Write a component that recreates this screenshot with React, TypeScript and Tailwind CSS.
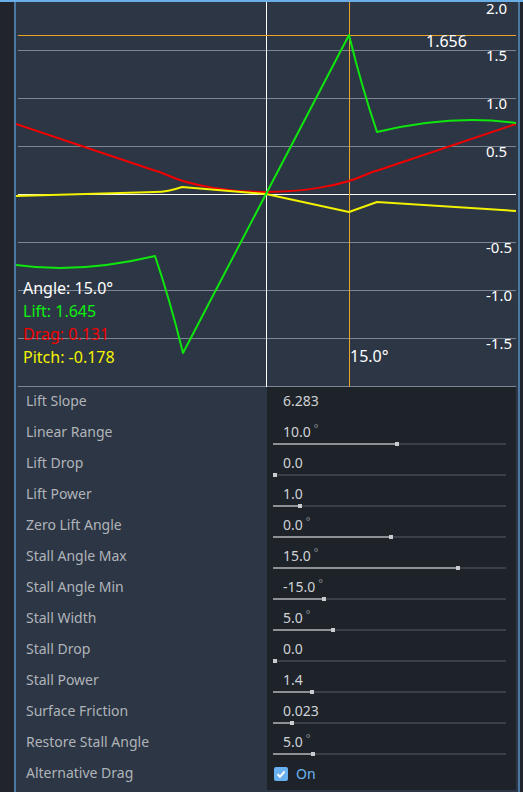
import React from "react";

type Row = {
  label: string;
  value?: string;
  deg?: boolean;
  f?: number;
  check?: boolean;
};

const rows: Row[] = [
  { label: "Lift Slope", value: "6.283" },
  { label: "Linear Range", value: "10.0", deg: true, f: 0.533 },
  { label: "Lift Drop", value: "0.0", f: 0 },
  { label: "Lift Power", value: "1.0", f: 0.109 },
  { label: "Zero Lift Angle", value: "0.0", deg: true, f: 0.507 },
  { label: "Stall Angle Max", value: "15.0", deg: true, f: 0.8 },
  { label: "Stall Angle Min", value: "-15.0", deg: true, f: 0.214 },
  { label: "Stall Width", value: "5.0", deg: true, f: 0.253 },
  { label: "Stall Drop", value: "0.0", f: 0 },
  { label: "Stall Power", value: "1.4", f: 0.16 },
  { label: "Surface Friction", value: "0.023", f: 0.074 },
  { label: "Restore Stall Angle", value: "5.0", deg: true, f: 0.165 },
  { label: "Alternative Drag", check: true },
];

const axis = [
  { t: "2.0", top: -1 },
  { t: "1.5", top: 46 },
  { t: "1.0", top: 94 },
  { t: "0.5", top: 142 },
  { t: "-0.5", top: 238 },
  { t: "-1.0", top: 286 },
  { t: "-1.5", top: 334 },
  { t: "-2.0", top: 382 },
];

const grid = [48, 96, 144, 240, 288, 336, 384];

function Chart() {
  return (
    <div className="relative h-[385px] w-[502px] overflow-hidden">
      <svg width="502" height="385" viewBox="0 0 502 385" className="block">
        {grid.map((y) => (
          <line key={y} x1={2} x2={500} y1={y + 0.5} y2={y + 0.5} stroke="#7d8793" strokeWidth={1} />
        ))}
        <line x1={2} x2={500} y1={192.5} y2={192.5} stroke="#ffffff" strokeWidth={1} />
        <line x1={250.5} x2={250.5} y1={0} y2={385} stroke="#ffffff" strokeWidth={1} />
        <line x1={2} x2={500} y1={33.5} y2={33.5} stroke="#eba22a" strokeWidth={1} />
        <line x1={333.5} x2={333.5} y1={0} y2={385} stroke="#eba22a" strokeWidth={1} />
        <path
          d="M0,122 L137,168 Q145,170 151,173 C175,184 214,190 250,190 C286,190 325,184 349,173 Q355,170 363,168 L500,122"
          fill="none"
          stroke="#f00000"
          strokeWidth={2}
          strokeLinejoin="round"
        />
        <path
          d="M0,194 L139,190 Q152,190 166,185 L250,192 L333,210 L361,200 L500,209"
          fill="none"
          stroke="#f2f200"
          strokeWidth={2}
          strokeLinejoin="round"
        />
        <path
          d="M0,263 Q64,272 139,254 Q154,298 167,351 L333,33 Q346,86 361,130 Q436,112 500,121"
          fill="none"
          stroke="#0ee60e"
          strokeWidth={2}
          strokeLinejoin="round"
        />
      </svg>
      {axis.map((a) => (
        <div
          key={a.t}
          className="absolute left-[470px] text-[15px] leading-none text-white"
          style={{ top: a.top }}
        >
          {a.t}
        </div>
      ))}
      <div className="absolute left-[410px] top-[31px] text-[16px] leading-none text-white">1.656</div>
      <div className="absolute left-[334px] top-[346px] text-[16px] leading-none text-white">15.0°</div>
      <div className="absolute left-[7px] top-[275px] flex flex-col text-[16px] leading-[23px]">
        <span className="text-white">Angle: 15.0°</span>
        <span className="text-[#10ee10]">Lift: 1.645</span>
        <span className="text-[#f20000]">Drag: 0.131</span>
        <span className="text-[#f4f400]">Pitch: -0.178</span>
      </div>
    </div>
  );
}

function Slider({ f }: { f: number }) {
  return (
    <div className="relative ml-[6px] mr-[10px] mt-[1px] h-[2px] bg-[#3b4048]">
      <div className="h-full bg-[#8e9297]" style={{ width: `calc(${f} * (100% - 4px) + 2px)` }} />
      <div
        className="absolute top-[-1px] h-[4px] w-[4px] bg-[#c9cbce]"
        style={{ left: `calc(${f} * (100% - 4px))` }}
      />
    </div>
  );
}

function Props() {
  return (
    <div className="flex flex-col pr-[2px] text-[14px] leading-[20px]">
      {rows.map((r) => (
        <div key={r.label} className="flex h-[31px]">
          <div className="w-[251px] pl-[10px] pt-[4px] text-[#b0b4ba]">{r.label}</div>
          <div className="flex-1 bg-[#1e2229]">
            {r.check ? (
              <div className="flex items-start pl-[7px] pt-[5px]">
                <div className="mt-[3px] flex h-[14px] w-[14px] items-center justify-center rounded-[2px] bg-[#68b0f0]">
                  <svg width="12" height="12" viewBox="0 0 12 12">
                    <path d="M2.5 6.3 L5 8.8 L9.6 3.4" fill="none" stroke="#ffffff" strokeWidth={2} />
                  </svg>
                </div>
                <span className="ml-[8px] text-[#6db6f2]">On</span>
              </div>
            ) : (
              <div className="flex flex-col">
                <div className="flex items-start pl-[16px] pt-[4px] text-[#cfd2d6]">
                  <span>{r.value}</span>
                  {r.deg && (
                    <span className="ml-[3px] mt-[-4px] text-[11px] text-[#8b9096]">°</span>
                  )}
                </div>
                {r.f !== undefined && <Slider f={r.f} />}
              </div>
            )}
          </div>
        </div>
      ))}
    </div>
  );
}

export default function App() {
  return (
    <div className="flex h-[792px] w-[523px] overflow-hidden border-t-2 border-[#6aaee8] bg-[#21252b] font-['Noto_Sans',sans-serif]">
      <div className="w-[14px]" />
      <div className="w-[2px] bg-[#4a78a1]" />
      <div className="flex w-[502px] flex-col bg-[#2c3644]">
        <Chart />
        <Props />
      </div>
      <div className="w-[2px] bg-[#4a78a1]" />
      <div className="flex-1" />
    </div>
  );
}
